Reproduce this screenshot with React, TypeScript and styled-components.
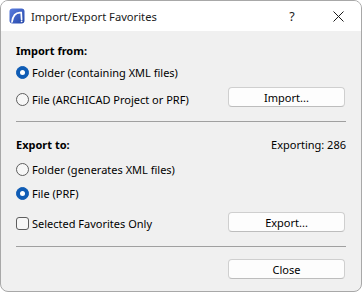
import React from "react";
import styled, { createGlobalStyle } from "styled-components";

const Global = createGlobalStyle`
  html, body { margin: 0; padding: 0; background: #ffffff; }
  body { font-family: "Noto Sans", "Open Sans", sans-serif; }
`;

const Window = styled.div`
  box-sizing: border-box;
  width: 362px;
  height: 292px;
  border: 1px solid #a8a8a8;
  border-radius: 8px;
  overflow: hidden;
  display: flex;
  flex-direction: column;
  background: #f0f0f0;
  color: #000;
  font-size: 11px;
`;

const TitleBar = styled.div`
  height: 30px;
  flex: none;
  background: #ffffff;
  display: flex;
  align-items: center;
  padding-left: 8px;
`;

const Title = styled.span`
  margin-left: 6px;
  font-size: 11.2px;
  color: #1a1a1a;
  flex: 1;
`;

const TitleButton = styled.span<{ $w: number }>`
  width: ${(p) => p.$w}px;
  display: flex;
  align-items: center;
  justify-content: center;
  font-size: 12.5px;
  color: #1a1a1a;
`;

const Body = styled.div`
  flex: 1;
  display: flex;
  flex-direction: column;
  padding: 0 15px;
`;

const Section = styled.div<{ $top: number; $bottom: number }>`
  display: flex;
  flex-direction: column;
  padding-top: ${(p) => p.$top}px;
  padding-bottom: ${(p) => p.$bottom}px;
`;

const Heading = styled.div<{ $h: number }>`
  height: ${(p) => p.$h}px;
  display: flex;
  align-items: center;
  justify-content: space-between;
  font-weight: 700;
`;

const Info = styled.span`
  font-weight: 400;
`;

const Row = styled.div<{ $h: number }>`
  height: ${(p) => p.$h}px;
  display: flex;
  align-items: center;
  justify-content: space-between;
`;

const Option = styled.label`
  display: flex;
  align-items: center;
  gap: 3px;
`;

const Radio = styled.span<{ $on?: boolean }>`
  box-sizing: border-box;
  width: 13px;
  height: 13px;
  border-radius: 50%;
  display: flex;
  align-items: center;
  justify-content: center;
  background: ${(p) => (p.$on ? "#0f5cb5" : "#f7f7f7")};
  border: 1px solid ${(p) => (p.$on ? "#0f5cb5" : "#5e5e5e")};
  &::after {
    content: "";
    display: ${(p) => (p.$on ? "block" : "none")};
    width: 5px;
    height: 5px;
    border-radius: 50%;
    background: #ffffff;
  }
`;

const Check = styled.span`
  box-sizing: border-box;
  width: 13px;
  height: 13px;
  border-radius: 3px;
  border: 1px solid #5e5e5e;
  background: #f7f7f7;
`;

const Button = styled.button<{ $lift?: number }>`
  box-sizing: border-box;
  width: 117px;
  height: 20px;
  margin-right: 1px;
  margin-bottom: ${(p) => p.$lift ?? 0}px;
  border: 1px solid #cfcfcf;
  border-bottom-color: #bdbdbd;
  border-radius: 4px;
  background: #fdfdfd;
  font-family: inherit;
  font-size: 11px;
  color: #000;
  padding: 0;
`;

const Separator = styled.div`
  height: 1px;
  background: #a0a0a0;
  flex: none;
`;

const Footer = styled.div`
  display: flex;
  justify-content: flex-end;
  padding-top: 12px;
`;

const AppIcon = () => (
  <svg width="16" height="16" viewBox="0 0 16 16">
    <defs>
      <linearGradient id="g" x1="0" y1="0" x2="1" y2="1">
        <stop offset="0" stopColor="#5b7ee0" />
        <stop offset="1" stopColor="#2446a8" />
      </linearGradient>
    </defs>
    <rect x="0.5" y="0.5" width="15" height="15" rx="3" fill="url(#g)" />
    <path d="M3 14 C3.8 7.5 7 4 12.2 4.6 L12.6 11.5" fill="none" stroke="#ffffff" strokeWidth="1.7" strokeLinecap="round" />
    <circle cx="12.6" cy="13.3" r="0.9" fill="#ffffff" />
  </svg>
);

const CloseX = () => (
  <svg width="11" height="11" viewBox="0 0 11 11">
    <path d="M0.5 0.5 L10.5 10.5 M10.5 0.5 L0.5 10.5" stroke="#1a1a1a" strokeWidth="1" />
  </svg>
);

export default function App() {
  return (
    <>
      <Global />
      <Window>
        <TitleBar>
          <AppIcon />
          <Title>Import/Export Favorites</Title>
          <TitleButton $w={46}>?</TitleButton>
          <TitleButton $w={46}>
            <CloseX />
          </TitleButton>
        </TitleBar>
        <Body>
          <Section $top={10} $bottom={8}>
            <Heading $h={18}>Import from:</Heading>
            <Row $h={27}>
              <Option>
                <Radio $on />
                Folder (containing XML files)
              </Option>
            </Row>
            <Row $h={27}>
              <Option>
                <Radio />
                File (ARCHICAD Project or PRF)
              </Option>
              <Button $lift={5}>Import...</Button>
            </Row>
          </Section>
          <Separator />
          <Section $top={11} $bottom={3}>
            <Heading $h={22}>
              Export to:
              <Info>Exporting: 286</Info>
            </Heading>
            <Row $h={28}>
              <Option>
                <Radio />
                Folder (generates XML files)
              </Option>
            </Row>
            <Row $h={20}>
              <Option>
                <Radio $on />
                File (PRF)
              </Option>
            </Row>
            <Row $h={40}>
              <Option>
                <Check />
                Selected Favorites Only
              </Option>
              <Button $lift={2}>Export...</Button>
            </Row>
          </Section>
          <Separator />
          <Footer>
            <Button>Close</Button>
          </Footer>
        </Body>
      </Window>
    </>
  );
}
